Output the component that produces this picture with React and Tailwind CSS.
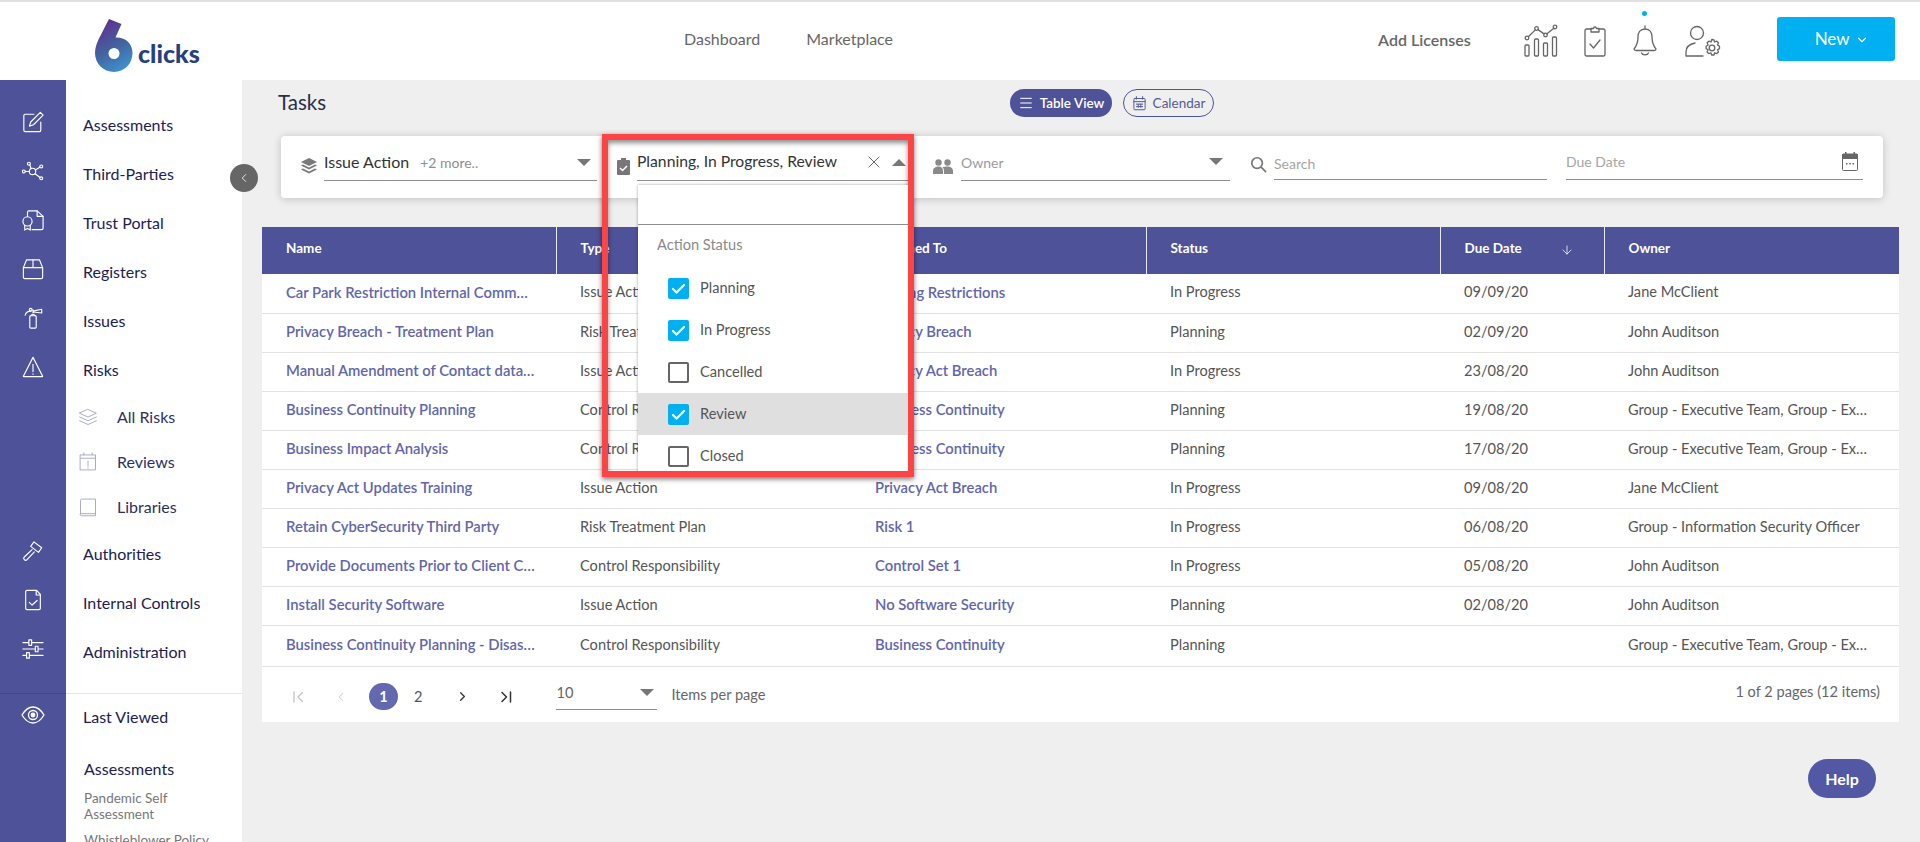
import { ChevronLeft, ChevronRight, ChevronDown, ArrowDown, X, Menu } from 'lucide-react';

const rows = [
  ['Car Park Restriction Internal Comm…', 'Issue Action', 'Parking Restrictions', 'In Progress', '09/09/20', 'Jane McClient'],
  ['Privacy Breach - Treatment Plan', 'Risk Treatment Plan', 'Privacy Breach', 'Planning', '02/09/20', 'John Auditson'],
  ['Manual Amendment of Contact data…', 'Issue Action', 'Privacy Act Breach', 'In Progress', '23/08/20', 'John Auditson'],
  ['Business Continuity Planning', 'Control Responsibility', 'Business Continuity', 'Planning', '19/08/20', 'Group - Executive Team, Group - Ex…'],
  ['Business Impact Analysis', 'Control Responsibility', 'Business Continuity', 'Planning', '17/08/20', 'Group - Executive Team, Group - Ex…'],
  ['Privacy Act Updates Training', 'Issue Action', 'Privacy Act Breach', 'In Progress', '09/08/20', 'Jane McClient'],
  ['Retain CyberSecurity Third Party', 'Risk Treatment Plan', 'Risk 1', 'In Progress', '06/08/20', 'Group - Information Security Officer'],
  ['Provide Documents Prior to Client C…', 'Control Responsibility', 'Control Set 1', 'In Progress', '05/08/20', 'John Auditson'],
  ['Install Security Software', 'Issue Action', 'No Software Security', 'Planning', '02/08/20', 'John Auditson'],
  ['Business Continuity Planning - Disas…', 'Control Responsibility', 'Business Continuity', 'Planning', '', 'Group - Executive Team, Group - Ex…'],
];

const statusOptions = [
  { label: 'Planning', checked: true },
  { label: 'In Progress', checked: true },
  { label: 'Cancelled', checked: false },
  { label: 'Review', checked: true, active: true },
  { label: 'Closed', checked: false },
];

const Ico = ({ size = 22, w, h, box = '0 0 24 24', sw = 1.25, color = 'currentColor', children }) => (
  <svg width={w || size} height={h || size} viewBox={box} fill="none" stroke={color} strokeWidth={sw} strokeLinecap="round" strokeLinejoin="round">
    {children}
  </svg>
);

// left rail icons
const railTop = [
  <Ico key="edit">
    <path d="M13 3.5H3.5A1.5 1.5 0 0 0 2 5v16a1.5 1.5 0 0 0 1.5 1.5h15.5A1.5 1.5 0 0 0 20.5 21v-9" />
    <path d="M20 1.5l3 3L12.5 15 8 16.5 9.5 12z" />
  </Ico>,
  <Ico key="net">
    <circle cx="11.5" cy="12.5" r="3.5" />
    <circle cx="7.5" cy="4" r="1.6" />
    <circle cx="21" cy="7" r="1.6" />
    <circle cx="2" cy="12.5" r="1.6" />
    <circle cx="21" cy="20" r="1.6" />
    <path d="M8.5 5.5l1.5 4M19.5 8l-5 2.8M3.6 12.5H8M14.2 15l5.5 4" />
  </Ico>,
  <Ico key="cert">
    <path d="M6 8V3.5A1.5 1.5 0 0 1 7.5 2h9L23 8v13a1.5 1.5 0 0 1-1.5 1.5H11" />
    <path d="M16.5 2v6H23" />
    <circle cx="6" cy="13.5" r="5" />
    <path d="M3 17.5V23l3-1.8L9 23v-5.5" />
  </Ico>,
  <Ico key="box">
    <path d="M5 2h14l3.5 8.5V21a1.5 1.5 0 0 1-1.5 1.5H3A1.5 1.5 0 0 1 1.5 21V10.5z" />
    <path d="M1.5 10.5h21M12 2v8.5" />
  </Ico>,
  <Ico key="ext">
    <rect x="8.5" y="9.5" width="7" height="13.5" rx="1" />
    <path d="M9.5 9.5a3 3 0 0 1 5 0M12 6.5V3M12 4.5l9.5-2v4l-9.5-1M9.5 4.5C6 4.5 4 6.5 3.5 9" />
    <circle cx="9.5" cy="3" r="1.5" />
  </Ico>,
  <Ico key="warn">
    <path d="M12 1.5L22.5 22a.5.5 0 0 1-.5.5H2a.5.5 0 0 1-.5-.5z" />
    <path d="M12 9v8M12 19.5v.5" />
  </Ico>,
];

const railBottom = [
  <Ico key="gavel">
    <path d="M13 2l8.5 6.5-3.5 5L9.5 7z" />
    <path d="M11 10.5l-8.5 8a2 2 0 0 0 3 3l8-8.5" />
  </Ico>,
  <Ico key="doc">
    <path d="M16 1.5H5.5A1.5 1.5 0 0 0 4 3v18a1.5 1.5 0 0 0 1.5 1.5h13A1.5 1.5 0 0 0 20 21V6z" />
    <path d="M15.5 1.5v5H20M8 14.5l3 3 5.5-5" />
  </Ico>,
  <Ico key="sliders">
    <path d="M1 5h22M1 12h22M1 19h22" />
    <rect x="7.5" y="2" width="3" height="6" fill="#4e5299" />
    <rect x="14.5" y="9" width="3" height="6" fill="#4e5299" />
    <rect x="5" y="16" width="3" height="6" fill="#4e5299" />
  </Ico>,
];

const navTop = ['Assessments', 'Third-Parties', 'Trust Portal', 'Registers', 'Issues', 'Risks'];
const navBottom = ['Authorities', 'Internal Controls', 'Administration'];

const subNav = [
  {
    label: 'All Risks',
    icon: (
      <Ico size={20} sw={1.1} color="#a3a6bd">
        <path d="M12 3l10 4.5L12 12 2 7.5z" />
        <path d="M2 12l10 4.5L22 12M2 16.5L12 21l10-4.5" />
      </Ico>
    ),
  },
  {
    label: 'Reviews',
    icon: (
      <Ico size={20} sw={1.1} color="#a3a6bd">
        <rect x="3" y="3.5" width="18" height="18" />
        <path d="M3 7.5h18M7 1v2.5M17 1v2.5M12 11v6M12 19v.5" />
      </Ico>
    ),
  },
  {
    label: 'Libraries',
    icon: (
      <Ico size={20} sw={1.1} color="#a3a6bd">
        <path d="M3 20V4a1.5 1.5 0 0 1 1.5-1.5H21v20H4.5A1.5 1.5 0 0 1 3 20zM3 20h18" />
      </Ico>
    ),
  },
];

const Caret = ({ up, color = '#777' }) => (
  <span className={`block w-0 h-0 border-l-[7px] border-r-[7px] border-l-transparent border-r-transparent ${up ? 'border-b-[7px]' : 'border-t-[7px]'}`} style={up ? { borderBottomColor: color } : { borderTopColor: color }} />
);

const Logo = () => (
  <svg width="38" height="53" viewBox="0 0 38 53">
    <defs>
      <linearGradient id="six" x1="0.3" y1="0" x2="0.7" y2="1">
        <stop offset="0" stopColor="#5e2f90" />
        <stop offset="0.55" stopColor="#42659f" />
        <stop offset="1" stopColor="#3f93d2" />
      </linearGradient>
    </defs>
    <path fillRule="evenodd" fill="url(#six)" d="M14 0l12.5 5-6 13.5C31 18 37.5 25 37.5 34c0 10.5-8 19-18.5 19S0 44.5 0 34c0-5 1.5-9 3.5-13.5zM19 29a5.5 5.5 0 1 0 0 11 5.5 5.5 0 0 0 0-11z" />
  </svg>
);

const Field = ({ w, children, className = '' }) => (
  <div className={`h-[37px] border-b border-[#8f8f8f] flex items-center shrink-0 ${w} ${className}`}>{children}</div>
);

const cellTh = 'text-left px-6 pb-[4px] text-[13.5px] font-bold text-white border-l border-[#e8e8f0] first:border-l-0';

export default function App() {
  return (
    <div className="relative h-[842px] w-[1920px] overflow-hidden bg-[#efefef] text-[#555] font-['Lato','Liberation_Sans',sans-serif]">
      {/* top bar */}
      <header className="h-[80px] bg-white border-t-2 border-[#dfdfe4] flex items-center">
        <div className="w-[262px] shrink-0 pl-[95px] flex items-end h-[64px] pb-[1px]">
          <Logo />
          <span className="ml-[5px] mb-[6px] text-[25px] leading-none font-black text-[#24407f]">clicks</span>
        </div>
        <nav className="ml-[422px] flex gap-[46px] text-[16px] text-[#666] mb-[4px]">
          <span>Dashboard</span>
          <span>Marketplace</span>
        </nav>
        <span className="ml-[485px] text-[16px] font-semibold text-[#666] mb-[3px]">Add Licenses</span>
        <div className="ml-[53px] flex items-center text-[#666]">
          <Ico w={34} h={34} box="0 0 34 34" sw={1.3}>
            <rect x="1" y="21" width="4" height="11" rx="1" />
            <rect x="10.5" y="15" width="4" height="17" rx="1" />
            <rect x="19.5" y="19" width="4" height="13" rx="1" />
            <rect x="28.5" y="13" width="4" height="19" rx="1" />
            <circle cx="3" cy="14" r="1.8" />
            <circle cx="12.5" cy="4.5" r="1.8" />
            <circle cx="21.5" cy="11" r="1.8" />
            <circle cx="31" cy="3" r="1.8" />
            <path d="M4.3 12.7l7-6.8M14 5.6l6 4.3M23 9.8l6.8-5.6" />
          </Ico>
          <div className="ml-[26px]">
            <Ico w={22} h={32} box="0 0 22 32" sw={1.3}>
              <path d="M7 4H2.5A1.5 1.5 0 0 0 1 5.5v24A1.5 1.5 0 0 0 2.5 31h17a1.5 1.5 0 0 0 1.5-1.5v-24A1.5 1.5 0 0 0 19.5 4H15" />
              <path d="M7 7V3.5h2.5a1.5 1.5 0 0 1 3 0H15V7zM6 19l3.5 4L16 15" />
            </Ico>
          </div>
          <div className="ml-[27px] relative">
            <Ico w={24} h={32} box="0 0 24 32" sw={1.3}>
              <path d="M12 1v3M12 4c-5 0-7 4-7 8 0 6-1.5 9-4 12 0 1 1 1.5 2 1.5h18c1 0 2-.5 2-1.5-2.5-3-4-6-4-12 0-4-2-8-7-8zM8.5 28c1 2.5 6 2.5 7 0" />
            </Ico>
            <span className="absolute -top-[14px] left-[9px] w-[5px] h-[5px] rounded-full bg-[#00b0f0]" />
          </div>
          <div className="ml-[28px]">
            <Ico w={37} h={32} box="0 0 37 32" sw={1.3}>
              <circle cx="12" cy="8" r="6.5" />
              <path d="M1 31v-4c0-5 4-8 9-9M1 31h17" />
              <circle cx="27" cy="23" r="2.8" />
              <path d="M27 14.5l2 .3.6 2.2 2.2-.8 1.7 1.6-1 2.2 2 1.2v2.4l-2 1.2 1 2.2-1.7 1.6-2.2-.8-.6 2.2h-2.4l-.6-2.2-2.2.8-1.7-1.6 1-2.2-2-1.2v-2.4l2-1.2-1-2.2 1.700-1.600 2.200.8.6-2.200z" />
            </Ico>
          </div>
        </div>
        <button className="ml-[55px] w-[118px] h-[44px] pl-[12px] rounded-[3px] bg-[#00b0f0] text-white text-[17px] flex items-center justify-center gap-[5px] mb-[4px]">
          New <ChevronDown size={14} strokeWidth={2} className="mt-[2px]" />
        </button>
      </header>

      <div className="flex h-[762px]">
        {/* icon rail */}
        <aside className="w-[66px] shrink-0 bg-[#4e5299] text-white flex flex-col">
          <div className="pt-[17px]">
            {railTop.map((icon, i) => (
              <div key={i} className="h-[49px] flex items-center justify-center">{icon}</div>
            ))}
          </div>
          <div className="mt-[135px]">
            {railBottom.map((icon, i) => (
              <div key={i} className="h-[49px] flex items-center justify-center">{icon}</div>
            ))}
          </div>
          <div className="mt-[20px] border-t border-[#44488a] pt-[9px] flex justify-center">
            <Ico size={24} sw={1.3}>
              <path d="M1 12c3-5 7-8 11-8s8 3 11 8c-3 5-7 8-11 8s-8-3-11-8z" />
              <circle cx="12" cy="12" r="4.5" />
              <circle cx="12" cy="12" r="1.8" fill="currentColor" />
            </Ico>
          </div>
        </aside>

        {/* nav panel */}
        <aside className="w-[176px] shrink-0 bg-white text-[16px] text-[#1c2152] flex flex-col">
          <div className="pt-[20px] pl-[17px]">
            {navTop.map(n => (
              <div key={n} className="h-[49px] flex items-center">{n}</div>
            ))}
          </div>
          <div>
            {subNav.map(s => (
              <div key={s.label} className="h-[45px] flex items-center pl-[12px] text-[#2c3160]">
                <span className="w-[39px] shrink-0">{s.icon}</span>
                {s.label}
              </div>
            ))}
          </div>
          <div className="pl-[17px]">
            {navBottom.map(n => (
              <div key={n} className="h-[49px] flex items-center">{n}</div>
            ))}
          </div>
          <div className="mt-[17px] border-t border-[#e6e6e6] pl-[17px] pt-[11px]">
            <div className="leading-[24px]">Last Viewed</div>
            <div className="mt-[28px] ml-[1px] leading-[24px]">Assessments</div>
            <div className="mt-[9px] ml-[1px] text-[13.5px] leading-[16px] text-[#777]">Pandemic Self<br />Assessment</div>
            <div className="mt-[10px] ml-[1px] text-[13.5px] leading-[16px] text-[#777] whitespace-nowrap">Whistleblower Policy</div>
          </div>
        </aside>

        {/* main */}
        <main className="relative flex-1 min-w-0">
          <div className="h-[56px] flex items-center relative">
            <h1 className="ml-[36px] text-[20.5px] text-[#2a2f45] mb-[12px]">Tasks</h1>
            <div className="absolute left-[768px] top-[9px] flex gap-[11px] text-[13.5px]">
              <span className="h-[28px] w-[102px] rounded-full bg-[#4e5299] text-white font-semibold flex items-center justify-center gap-[6px]">
                <Menu size={16} strokeWidth={1.5} /> Table View
              </span>
              <span className="h-[28px] w-[91px] rounded-full border border-[#4e5299] text-[#555b90] flex items-center justify-center gap-[6px]">
                <Ico size={15} sw={1.5} color="#4e5299">
                  <rect x="3" y="4" width="18" height="18" rx="1.5" />
                  <path d="M3 9h18M7 1v4M17 1v4M7 13h10M7 17h10M10 13v5M14 13v5" />
                </Ico>
                Calendar
              </span>
            </div>
          </div>

          {/* filters */}
          <div className="ml-[39px] w-[1602px] h-[62px] bg-white rounded-[4px] shadow-[0_1px_8px_rgba(0,0,0,0.2)] flex items-start pl-[20px] pt-[8px] text-[16px]">
            <span className="w-[23px] mt-[14px] shrink-0">
              <svg width="16" height="17" viewBox="0 0 16 17" fill="#7a7a7a">
                <path d="M8 0l8 4-8 4-8-4z" />
                <path d="M0 7.5l2-1 6 3 6-3 2 1-8 4zM0 11.5l2-1 6 3 6-3 2 1-8 4z" />
              </svg>
            </span>
            <Field w="w-[273px]">
              <span className="text-[#333]">Issue Action</span>
              <span className="ml-[11px] text-[14px] text-[#8e8e8e]">+2 more..</span>
              <span className="ml-auto mr-[6px]"><Caret /></span>
            </Field>
            <span className="ml-[20px] w-[20px] mt-[14px] shrink-0">
              <svg width="13" height="17" viewBox="0 0 13 17" fill="#777">
                <path d="M4 0h5v2h3a1 1 0 0 1 1 1v13a1 1 0 0 1-1 1H1a1 1 0 0 1-1-1V3a1 1 0 0 1 1-1h3z" />
                <path d="M3 10l2.5 2.5L10 8" stroke="#fff" strokeWidth="1.5" fill="none" />
              </svg>
            </span>
            <Field w="w-[271px]">
              <span className="text-[#333] text-[15.7px]">Planning, In Progress, Review</span>
              <X size={20} strokeWidth={0.9} className="ml-auto text-[#333]" />
              <span className="ml-[8px] mr-[2px]"><Caret up /></span>
            </Field>
            <span className="ml-[25px] w-[28px] mt-[15px] shrink-0">
              <svg width="20" height="15" viewBox="0 0 20 15" fill="#8a8a8a">
                <circle cx="5.5" cy="3.5" r="3.2" />
                <circle cx="14.5" cy="3.5" r="3.2" />
                <path d="M0 15v-3c0-3 2.5-4.5 5.5-4.5S10 9 10 12v3zM11 15v-3c0-1.5-.5-3-1.5-3.8 1-.5 3-.7 5-.7 3 0 5.5 1.5 5.5 4.5v3z" />
              </svg>
            </span>
            <Field w="w-[269px]">
              <span className="text-[#9b9b9b] text-[14px]">Owner</span>
              <span className="ml-auto mr-[7px] mb-[2px]"><Caret /></span>
            </Field>
            <span className="ml-[20px] w-[24px] mt-[12px] shrink-0">
              <Ico size={17} sw={2.4} color="#777"><circle cx="10" cy="10" r="7.5" /><path d="M16 16l6 6" /></Ico>
            </span>
            <Field w="w-[273px]" className="!h-[36px]">
              <span className="text-[#a5a5a5] text-[14px] mt-[3px]">Search</span>
            </Field>
            <Field w="w-[297px]" className="ml-[19px] !h-[36px]">
              <span className="text-[#a5a5a5] text-[14px]">Due Date</span>
              <span className="ml-auto mr-[5px] mb-[1px]">
                <svg width="16" height="19" viewBox="0 0 16 19" fill="none">
                  <path d="M3 0h1.5v2H3zM11.5 0H13v2h-1.5z" fill="#666" />
                  <rect x="0.5" y="2" width="15" height="16.5" rx="1" stroke="#666" />
                  <path d="M0 2h16v5H0z" fill="#666" />
                  <path d="M4 11h1.5v1.5H4zM7.3 11h1.5v1.5H7.3zM10.5 11H12v1.5h-1.5z" fill="#666" />
                </svg>
              </span>
            </Field>
          </div>

          {/* grid */}
          <div className="ml-[20px] mt-[29px] w-[1637px] bg-white">
            <table className="w-full table-fixed border-collapse text-[14.6px]">
              <colgroup>
                <col className="w-[294px]" />
                <col className="w-[295px]" />
                <col className="w-[295px]" />
                <col className="w-[294px]" />
                <col className="w-[164px]" />
                <col className="w-[295px]" />
              </colgroup>
              <thead>
                <tr className="h-[47px] bg-[#4e5299]">
                  <th className={cellTh}>Name</th>
                  <th className={cellTh}>Type</th>
                  <th className={cellTh}>Assigned To</th>
                  <th className={cellTh}>Status</th>
                  <th className={cellTh}>
                    <span className="flex items-center justify-between pr-[6px]">
                      Due Date <ArrowDown size={14} strokeWidth={1.3} className="mt-[3px]" />
                    </span>
                  </th>
                  <th className={cellTh}>Owner</th>
                </tr>
              </thead>
              <tbody>
                {rows.map((r, i) => (
                  <tr key={i} className={`border-b border-[#e2e2e2] ${i === rows.length - 1 ? 'h-[41px]' : 'h-[39px]'}`}>
                    <td className="px-6 pb-[2px] whitespace-nowrap font-semibold text-[14.8px] text-[#6166ac]">{r[0]}</td>
                    <td className="px-6 pb-[2px] whitespace-nowrap">{r[1]}</td>
                    <td className="px-6 pb-[2px] whitespace-nowrap font-semibold text-[14.8px] text-[#6166ac]">{r[2]}</td>
                    <td className="px-6 pb-[2px] whitespace-nowrap">{r[3]}</td>
                    <td className="px-6 pb-[2px] whitespace-nowrap">{r[4]}</td>
                    <td className="px-6 pb-[2px] whitespace-nowrap">{r[5]}</td>
                  </tr>
                ))}
              </tbody>
            </table>
            <div className="h-[55px] flex items-center text-[14.6px] pt-[5px]">
              <span className="ml-[31px] w-[12px] flex items-center text-[#c4c4c4]">
                <Ico w={12} h={12} box="0 0 12 12" sw={1.3}><path d="M1 1v10M9.5 1.5L5 6l4.5 4.5" /></Ico>
              </span>
              <ChevronLeft size={14} strokeWidth={1.6} className="ml-[29px] text-[#c4c4c4]" />
              <span className="ml-[21px] w-[29px] h-[27px] rounded-full bg-[#6369ae] text-white font-bold flex items-center justify-center">1</span>
              <span className="ml-[16px] text-[#555]">2</span>
              <ChevronRight size={15} strokeWidth={2} className="ml-[33px] text-[#333]" />
              <span className="ml-[30px] w-[12px] flex items-center text-[#333]">
                <Ico w={12} h={12} box="0 0 12 12" sw={1.5}><path d="M2 1.5L6.5 6 2 10.5M10.5 1v10" /></Ico>
              </span>
              <div className="ml-[44px] w-[101px] h-[26px] border-b border-[#8f8f8f] flex items-center justify-between pr-[3px]">
                <span className="text-[#666] mb-[6px]">10</span>
                <span className="mb-[8px]"><Caret /></span>
              </div>
              <span className="ml-[14px] mb-[3px] text-[#666]">Items per page</span>
              <span className="ml-auto mr-[19px] mb-[9px] text-[#666]">1 of 2 pages (12 items)</span>
            </div>
          </div>
        </main>
      </div>

      {/* collapse handle */}
      <button className="absolute left-[230px] top-[164px] w-[28px] h-[28px] rounded-full bg-[#666] text-white flex items-center justify-center">
        <ChevronLeft size={14} strokeWidth={1.4} />
      </button>

      {/* highlighted status dropdown */}
      <div className="absolute left-[602px] top-[134px] w-[312px] h-[343px] border-[6px] border-[#fd4343] overflow-hidden shadow-[0_2px_5px_rgba(0,0,0,0.55),inset_0_3px_5px_rgba(0,0,0,0.45)]">
        <div className="ml-[30px] mt-[45px] w-[270px] bg-white shadow-[0_0_3px_rgba(0,0,0,0.35)] text-[14.6px]">
          <div className="h-[40px] border-b border-[#8f8f8f]" />
          <div className="pl-[19px] pt-[9px] h-[40px] text-[#8a8a8a]">Action Status</div>
          <div className="pt-[2px]">
            {statusOptions.map(o => (
              <div key={o.label} className={`h-[42px] flex items-center pl-[30px] text-[#555] ${o.active ? 'bg-[#dfdfdf]' : ''}`}>
                <span className={`w-[21px] h-[21px] rounded-[2px] flex items-center justify-center mr-[11px] ${o.checked ? 'bg-[#00b0f0]' : 'border-2 border-[#666]'}`}>
                  {o.checked && (
                    <Ico w={15} h={15} box="0 0 15 15" sw={2.2} color="#fff"><path d="M2 8l3.5 3.5L13 4" /></Ico>
                  )}
                </span>
                {o.label}
              </div>
            ))}
          </div>
        </div>
      </div>

      <button className="absolute left-[1808px] top-[759px] w-[68px] h-[39px] rounded-full bg-[#5258a4] text-white text-[16px] font-bold">Help</button>
    </div>
  );
}
